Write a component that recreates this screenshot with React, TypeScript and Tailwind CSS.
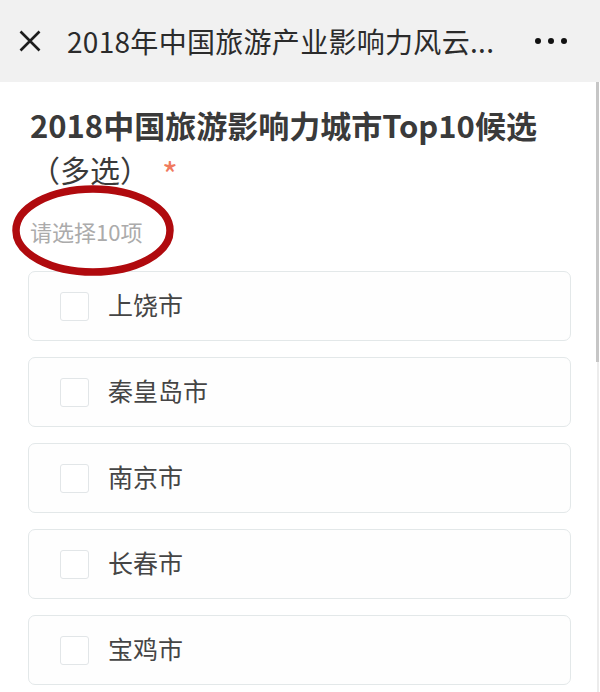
import React from "react";

const cities = ["上饶市", "秦皇岛市", "南京市", "长春市", "宝鸡市"];

export default function App() {
  return (
    <div
      className="relative w-[600px] h-[692px] overflow-hidden bg-white"
      style={{ fontFamily: '"Noto Sans CJK SC", "Noto Sans", sans-serif' }}
    >
      <div className="h-[82px] bg-[#f1f1f1] flex items-center">
        <svg width="22" height="22" viewBox="0 0 22 22" className="ml-[19px] shrink-0">
          <path d="M1.5 1.5 L20.5 20.5 M20.5 1.5 L1.5 20.5" stroke="#1c1c1c" strokeWidth="2.6" strokeLinecap="butt" />
        </svg>
        <div className="ml-[26px] text-[28px] leading-none text-[#2b2b2b] tracking-[0.3px] flex-1 whitespace-nowrap">
          2018年中国旅游产业影响力风云...
        </div>
        <div className="flex gap-[7px] mr-[33px]">
          <span className="w-[6px] h-[6px] rounded-full bg-[#111]" />
          <span className="w-[6px] h-[6px] rounded-full bg-[#111]" />
          <span className="w-[6px] h-[6px] rounded-full bg-[#111]" />
        </div>
      </div>

      <div className="pl-[30px] pt-[21px]">
        <div className="text-[31px] leading-[44px] font-bold text-[#3a3a3a]">
          2018中国旅游影响力城市Top10候选
        </div>
        <div className="text-[30px] leading-[44px] text-[#3a3a3a] flex items-center">
          <span>（多选）</span>
          <span className="ml-[12px] mt-[10px] text-[#f07a5e] text-[34px] leading-none">*</span>
        </div>
        <div className="mt-[25px] text-[22px] leading-[30px] text-[#ababab]">请选择10项</div>
      </div>

      <div className="mt-[25px] pl-[28px] pr-[29px] flex flex-col gap-[16px]">
        {cities.map((c) => (
          <div
            key={c}
            className="h-[70px] shrink-0 rounded-[7px] border border-[#e3e8e9] bg-[#fefefe] flex items-center"
          >
            <div className="ml-[31px] w-[29px] h-[29px] rounded-[3px] border border-[#e2e6e8] bg-white shrink-0" />
            <div className="ml-[19px] -mt-[4px] text-[25px] text-[#454545] leading-none">{c}</div>
          </div>
        ))}
      </div>

      <svg className="absolute left-0 top-0 pointer-events-none" width="200" height="300">
        <ellipse cx="93" cy="230.5" rx="77" ry="41.5" fill="none" stroke="#b00a0e" strokeWidth="7.5" />
      </svg>

      <div className="absolute right-[1px] top-[82px] w-[3px] h-[280px] bg-[#c6c6c6]" />
      <div className="absolute right-[1px] top-[362px] w-[2px] h-[330px] bg-[#ececec]" />
    </div>
  );
}
